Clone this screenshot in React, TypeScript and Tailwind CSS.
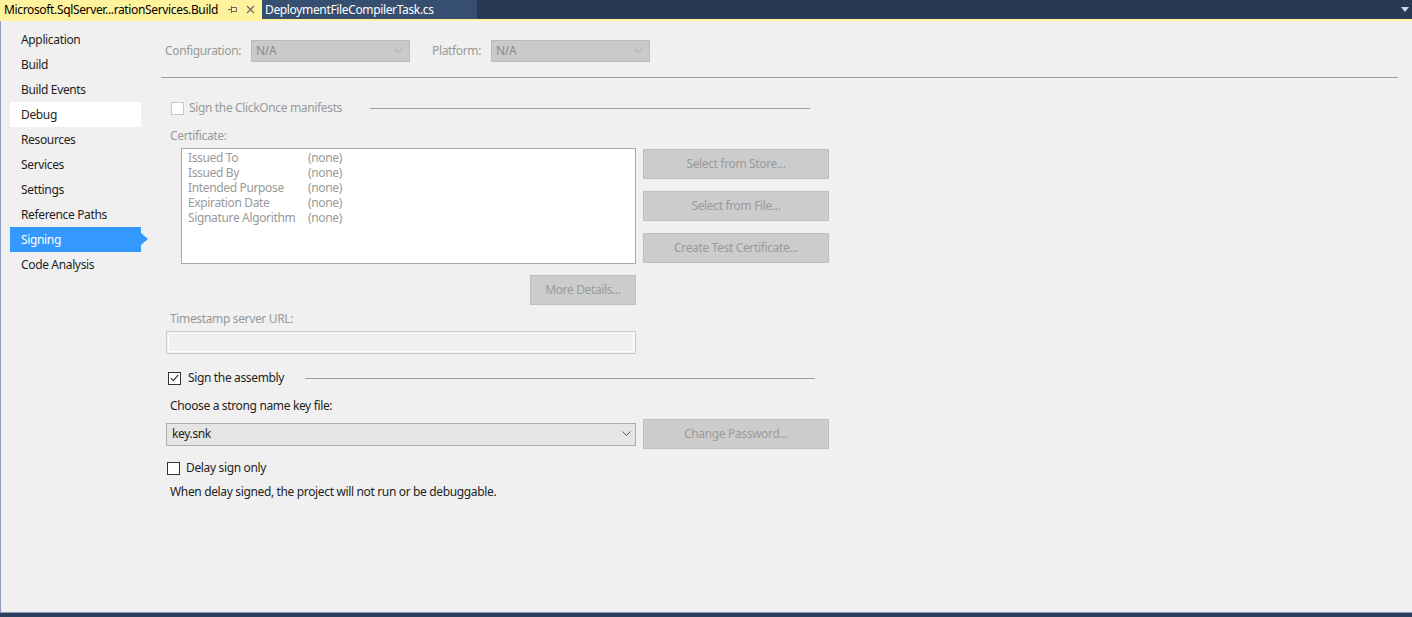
import React from "react";

const navItems = [
  "Application",
  "Build",
  "Build Events",
  "Debug",
  "Resources",
  "Services",
  "Settings",
  "Reference Paths",
  "Signing",
  "Code Analysis",
];

const certRows = [
  ["Issued To", "(none)"],
  ["Issued By", "(none)"],
  ["Intended Purpose", "(none)"],
  ["Expiration Date", "(none)"],
  ["Signature Algorithm", "(none)"],
];

const Chevron = ({ color = "#a0a0a0" }: { color?: string }) => (
  <svg width="9" height="6" viewBox="0 0 9 6" fill="none">
    <path d="M0.5 0.5 L4.5 4.5 L8.5 0.5" stroke={color} strokeWidth="1" />
  </svg>
);

const Button = ({ label, className = "" }: { label: string; className?: string }) => (
  <div
    className={`flex h-[30px] items-center justify-center border border-[#bfbfbf] bg-[#cccccc] text-[#9a9a9a] ${className}`}
  >
    {label}
  </div>
);

const Checkbox = ({ checked = false, disabled = false }: { checked?: boolean; disabled?: boolean }) => (
  <div
    className={`flex h-[13px] w-[13px] items-center justify-center border bg-white ${
      disabled ? "border-[#c8c8c8]" : "border-[#333333]"
    }`}
  >
    {checked && (
      <svg width="9" height="8" viewBox="0 0 9 8" fill="none">
        <path d="M0.8 4.2 L3.4 6.6 L8.2 0.8" stroke="#333" strokeWidth="1.1" />
      </svg>
    )}
  </div>
);

export default function App() {
  return (
    <div
      className="flex h-[617px] w-[1412px] flex-col bg-[#f0f0f0] text-[12px] leading-[16px] tracking-[-0.35px] text-[#1e1e1e]"
      style={{ fontFamily: '"Noto Sans", "Open Sans", sans-serif' }}
    >
      {/* tab strip */}
      <div className="flex h-[19px] items-stretch bg-[#293955]">
        <div className="flex w-[262px] items-center bg-[#fff29d] pl-[4px] text-black">
          <span className="whitespace-nowrap">Microsoft.SqlServer...rationServices.Build</span>
          <svg className="ml-[10px] shrink-0" width="9" height="9" viewBox="0 0 9 9" fill="none">
            <path d="M0 4.5 H3 M3.5 1 V8 M3.5 2.5 H8.5 V6.5 H3.5" stroke="#666" strokeWidth="1" />
          </svg>
          <svg className="ml-[9px] shrink-0" width="9" height="9" viewBox="0 0 9 9">
            <path d="M1 1 L8 8 M8 1 L1 8" stroke="#6b6b6b" strokeWidth="1.3" />
          </svg>
        </div>
        <div className="flex w-[215px] items-center bg-[#364e6f] pl-[3px] text-white">
          DeploymentFileCompilerTask.cs
        </div>
        <div className="flex-1" />
        <div className="flex items-center pr-[3px]">
          <svg width="8" height="5" viewBox="0 0 8 5">
            <path d="M0 0 H8 L4 5 Z" fill="#cfd6e5" />
          </svg>
        </div>
      </div>
      <div className="h-[2px] bg-[#fff29d]" />

      {/* body */}
      <div className="flex flex-1 border-l border-[#8d9ac4]">
        {/* sidebar */}
        <div className="w-[161px] pt-[6px]">
          <ul className="flex flex-col">
            {navItems.map((item) => {
              const active = item === "Signing";
              const hover = item === "Debug";
              return (
                <li key={item} className="relative ml-[9px] h-[25px] w-[131px]">
                  <div
                    className={`flex h-full items-center pl-[11px] ${
                      active ? "bg-[#3399ff] text-white" : hover ? "bg-white" : ""
                    }`}
                  >
                    {item}
                  </div>
                  {active && (
                    <div className="absolute right-[-7px] top-[6px] h-0 w-0 border-y-[6px] border-l-[7px] border-y-transparent border-l-[#3399ff]" />
                  )}
                </li>
              );
            })}
          </ul>
        </div>

        {/* main */}
        <div className="flex flex-1 flex-col pt-[19px]">
          <div className="flex items-center pl-[3px] text-[#999999]">
            <span className="w-[86px]">Configuration:</span>
            <div className="flex h-[22px] w-[159px] items-center justify-between border border-[#bcbcbc] bg-[#cacaca] pl-[4px] pr-[6px] text-[#8a8a8a]">
              <span>N/A</span>
              <Chevron color="#a8a8a8" />
            </div>
            <span className="ml-[22px] w-[59px]">Platform:</span>
            <div className="flex h-[22px] w-[159px] items-center justify-between border border-[#bcbcbc] bg-[#cacaca] pl-[4px] pr-[6px] text-[#8a8a8a]">
              <span>N/A</span>
              <Chevron color="#a8a8a8" />
            </div>
          </div>
          <div className="mt-[15px] mr-[14px] -ml-[1px] h-px bg-[#a0a0a0]" />

          <div className="ml-[8px] mt-[22px] flex w-[660px] flex-col text-[#999999]">
            <div className="flex items-center">
              <div className="ml-px">
                <Checkbox disabled />
              </div>
              <span className="ml-[5px]">Sign the ClickOnce manifests</span>
              <div className="ml-[28px] h-px w-[440px] bg-[#a0a0a0]" />
            </div>
            <div className="mt-[12px]">Certificate:</div>

            <div className="mt-[4px] flex">
              <div className="ml-[11px] flex flex-col">
                <div className="h-[116px] w-[455px] border border-[#a9a9a9] bg-white pl-[6px] pt-px leading-[15px]">
                  {certRows.map(([k, v]) => (
                    <div key={k} className="flex">
                      <span className="w-[120px]">{k}</span>
                      <span>{v}</span>
                    </div>
                  ))}
                </div>
                <div className="mt-[11px] flex justify-end">
                  <Button label="More Details..." className="w-[106px]" />
                </div>
              </div>
              <div className="ml-[7px] flex flex-col gap-[12px] pt-px">
                <Button label="Select from Store..." className="w-[186px]" />
                <Button label="Select from File..." className="w-[186px]" />
                <Button label="Create Test Certificate..." className="w-[186px]" />
              </div>
            </div>

            <div className="mt-[6px]">Timestamp server URL:</div>
            <div className="-ml-[4px] mt-[4px] h-[23px] w-[470px] border border-[#cccccc] p-px">
              <div className="h-full w-full border border-white" />
            </div>
          </div>

          <div className="ml-[4px] mt-[16px] flex w-[670px] flex-col">
            <div className="flex items-center">
              <div className="ml-[2px]">
                <Checkbox checked />
              </div>
              <span className="ml-[7px]">Sign the assembly</span>
              <div className="ml-[21px] h-px w-[510px] bg-[#a0a0a0]" />
            </div>
            <div className="ml-[4px] mt-[12px]">Choose a strong name key file:</div>
            <div className="mt-[5px] flex items-center">
              <div className="flex h-[23px] w-[470px] items-center justify-between border border-[#acacac] bg-[#e5e5e5] pl-[5px] pr-[4px]">
                <span>key.snk</span>
                <Chevron color="#555" />
              </div>
              <Button label="Change Password..." className="ml-[7px] w-[186px]" />
            </div>
            <div className="mt-[11px] flex items-center">
              <div className="ml-px">
                <Checkbox />
              </div>
              <span className="ml-[6px]">Delay sign only</span>
            </div>
            <div className="ml-[4px] mt-[8px]">
              When delay signed, the project will not run or be debuggable.
            </div>
          </div>
        </div>
      </div>

      {/* bottom */}
      <div className="h-px bg-[#8d9ac4]" />
      <div className="h-[4px] bg-[#2d3f5e]" />
    </div>
  );
}
